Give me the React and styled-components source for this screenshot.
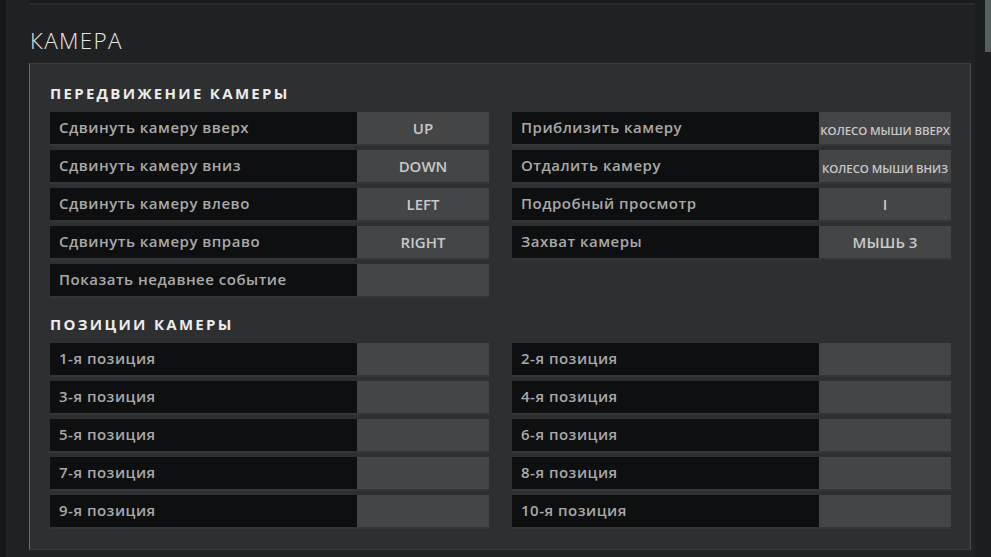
import styled, { createGlobalStyle } from 'styled-components'

const Global = createGlobalStyle`
  html, body {
    margin: 0;
    padding: 0;
    background: #202123;
    overflow: hidden;
  }
  body {
    font-family: "Open Sans", "Noto Sans", sans-serif;
  }
`

const Screen = styled.div`
  display: flex;
  width: 991px;
  height: 557px;
  background: #202123;
`

const LeftEdge = styled.div`
  width: 6px;
  background: #151617;
  flex-shrink: 0;
`

const Main = styled.div`
  flex: 1;
  display: flex;
  flex-direction: column;
  padding: 0 0 0 23px;
`

const RightEdge = styled.div`
  width: 16px;
  flex-shrink: 0;
  background: #1c1d1f;
  display: flex;
  justify-content: flex-end;
`

const ScrollThumb = styled.div`
  width: 6px;
  height: 52px;
  background: #56605f;
`

const PrevPanel = styled.div`
  height: 3px;
  background: #1a1b1d;
  border-bottom: 2px solid #2a2b2d;
`

const Title = styled.h1`
  margin: 21px 0 0 1px;
  height: 37px;
  font-family: "Open Sans", "Noto Sans", sans-serif;
  font-weight: 300;
  font-size: 22.5px;
  letter-spacing: 1.3px;
  color: #e6e6e6;
  line-height: 30px;
`

const Card = styled.div`
  width: 942px;
  box-sizing: border-box;
  background: #2e2f31;
  border: 1px solid #3c3d3f;
  border-right-color: #4a4b4d;
  border-left: 1px solid #4a73a8;
  padding: 19px 19px 22px 20px;
`

const Heading = styled.h2`
  margin: ${p => (p.$first ? '0' : '18px')} 0 9px 0;
  font-family: "Open Sans", "Noto Sans", sans-serif;
  font-weight: 700;
  font-size: 15px;
  letter-spacing: 2.3px;
  line-height: 20px;
  color: #ececec;
  text-transform: uppercase;
`

const Grid = styled.div`
  display: grid;
  grid-template-columns: 439px 439px;
  column-gap: 23px;
  row-gap: 6px;
`

const Column = styled.div`
  display: flex;
  flex-direction: column;
  gap: 6px;
`

const Row = styled.div`
  display: flex;
  height: 32px;
  box-shadow: 0 2px 0 #353638;
`

const Label = styled.div`
  flex: 1;
  background: #0e0f10;
  color: #a9a9a9;
  font-size: 15px;
  font-weight: 600;
  letter-spacing: 0.5px;
  line-height: 30px;
  padding-left: 9px;
  white-space: nowrap;
`

const Key = styled.div`
  width: 132px;
  background: #444547;
  color: #c9c9c9;
  display: flex;
  align-items: center;
  justify-content: center;
  font-size: ${p => (p.$small ? '11.5px' : '15px')};
  font-weight: 600;
  letter-spacing: ${p => (p.$small ? '-0.1px' : '0')};
  padding-top: ${p => (p.$small ? '5px' : '0')};
  box-sizing: border-box;
  white-space: nowrap;
  text-transform: uppercase;
`

const movement = [
  [
    ['Сдвинуть камеру вверх', 'UP'],
    ['Сдвинуть камеру вниз', 'DOWN'],
    ['Сдвинуть камеру влево', 'LEFT'],
    ['Сдвинуть камеру вправо', 'RIGHT'],
    ['Показать недавнее событие', ''],
  ],
  [
    ['Приблизить камеру', 'Колесо мыши вверх', true],
    ['Отдалить камеру', 'Колесо мыши вниз', true],
    ['Подробный просмотр', 'I'],
    ['Захват камеры', 'Мышь 3'],
  ],
]

const positions = [1, 2, 3, 4, 5, 6, 7, 8, 9, 10]

function Bind({ label, value, small }) {
  return (
    <Row>
      <Label>{label}</Label>
      <Key $small={small}>{value}</Key>
    </Row>
  )
}

export default function App() {
  return (
    <>
      <Global />
      <Screen>
        <LeftEdge />
        <Main>
          <PrevPanel />
          <Title>КАМЕРА</Title>
          <Card>
            <Heading $first>Передвижение камеры</Heading>
            <Grid>
              {movement.map((col, i) => (
                <Column key={i}>
                  {col.map(([l, v, s]) => (
                    <Bind key={l} label={l} value={v} small={s} />
                  ))}
                </Column>
              ))}
            </Grid>
            <Heading>Позиции камеры</Heading>
            <Grid>
              {positions.map(n => (
                <Bind key={n} label={`${n}-я позиция`} value="" />
              ))}
            </Grid>
          </Card>
        </Main>
        <RightEdge>
          <ScrollThumb />
        </RightEdge>
      </Screen>
    </>
  )
}
